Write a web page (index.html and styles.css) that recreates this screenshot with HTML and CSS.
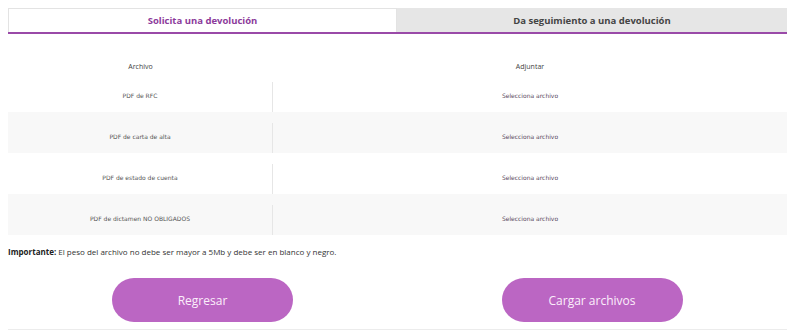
FILE: index.html
```html
<!DOCTYPE html>
<html lang="es">
<head>
    <meta charset="UTF-8">
    <meta name="viewport" content="width=device-width, initial-scale=1.0">
    <title>Devoluciones</title>
    <link rel="stylesheet" href="styles.css">
</head>
<body>
    <div class="page">
        <div class="tabs">
            <div class="tab active">Solicita una devolución</div>
            <div class="tab">Da seguimiento a una devolución</div>
        </div>

        <div class="files">
            <div class="row head">
                <div class="cell">Archivo</div>
                <div class="cell">Adjuntar</div>
            </div>
            <div class="row">
                <div class="cell name">PDF de RFC</div>
                <div class="cell pick">Selecciona archivo</div>
            </div>
            <div class="row alt">
                <div class="cell name">PDF de carta de alta</div>
                <div class="cell pick">Selecciona archivo</div>
            </div>
            <div class="row">
                <div class="cell name">PDF de estado de cuenta</div>
                <div class="cell pick">Selecciona archivo</div>
            </div>
            <div class="row alt">
                <div class="cell name">PDF de dictamen NO OBLIGADOS</div>
                <div class="cell pick">Selecciona archivo</div>
            </div>
        </div>

        <p class="note"><strong>Importante:</strong> El peso del archivo no debe ser mayor a 5Mb y debe ser en blanco y negro.</p>

        <div class="actions">
            <div class="slot"><button class="btn">Regresar</button></div>
            <div class="slot"><button class="btn">Cargar archivos</button></div>
        </div>
    </div>
</body>
</html>
```

FILE: styles.css
```css
/* Estilo general */
* {
    margin: 0;
    padding: 0;
    box-sizing: border-box;
}

body {
    background-color: #fff;
    font-family: "Open Sans", Arial, sans-serif;
}

.page {
    width: 779px;
    margin-left: 8px;
    padding-top: 8px;
    height: 330px;
    border-bottom: 1px solid #ececec;
}

/* Pestañas */
.tabs {
    display: grid;
    grid-template-columns: 389px 390px;
    height: 26px;
    border-bottom: 2px solid #9a4aa8;
}

.tab {
    display: flex;
    justify-content: center;
    align-items: center;
    background-color: #e6e6e6;
    color: #444;
    font-size: 9.5px;
    font-weight: 700;
}

.tab.active {
    background-color: #fff;
    color: #8c3b9b;
    border: 1px solid #e3e3e3;
    border-bottom: none;
}

/* Tabla de archivos */
.files {
    margin-top: 17px;
    font-family: "DejaVu Sans", Verdana, sans-serif;
    font-size: 6px;
    color: #555;
}

.row {
    display: grid;
    grid-template-columns: 265px 1fr;
    height: 41px;
    padding-top: 11px;
}

.row.alt {
    background-color: #f8f8f8;
}

.row.head {
    height: 20px;
    padding-top: 10px;
    font-family: "Open Sans", Arial, sans-serif;
    font-size: 7px;
    color: #444;
}

.cell {
    display: flex;
    justify-content: center;
    align-items: center;
}

.cell.name {
    border-right: 1px solid #e6e6e6;
    padding-bottom: 3px;
}

.cell.pick {
    color: #5a4a60;
    padding-bottom: 3px;
}

/* Nota */
.note {
    margin-top: 11px;
    font-size: 8px;
    color: #333;
}

.note strong {
    color: #222;
}

/* Botones */
.actions {
    display: grid;
    grid-template-columns: 389px 390px;
    margin-top: 21px;
}

.slot {
    display: flex;
    justify-content: center;
}

.btn {
    width: 181px;
    height: 44px;
    border: none;
    border-radius: 22px;
    background-color: #bb66c3;
    color: #fbeefb;
    font-family: "Open Sans", Arial, sans-serif;
    font-size: 12px;
    cursor: pointer;
}

.btn:hover {
    background-color: #a955b2;
}
```
